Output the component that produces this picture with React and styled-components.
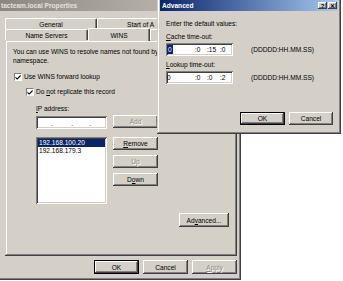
import React from "react";
import styled, { createGlobalStyle, css } from "styled-components";

const face = "#d4d0c8";

const GlobalStyle = createGlobalStyle`
  html, body {
    margin: 0;
    padding: 0;
    background: #fff;
  }
  body {
    font-family: "Liberation Sans", Arial, sans-serif;
    font-size: 6.6px;
    color: #000;
  }
`;

const raised = css`
  box-shadow: inset -1px -1px #404040, inset 1px 1px #fff,
    inset -2px -2px #808080, inset 2px 2px ${face};
`;

const sunken = css`
  box-shadow: inset 1px 1px #808080, inset -1px -1px #fff,
    inset 2px 2px #404040, inset -2px -2px ${face};
`;

const windowEdge = css`
  box-shadow: inset -1px -1px #404040, inset 1px 1px ${face},
    inset -2px -2px #808080, inset 2px 2px #fff;
`;

const Desktop = styled.div`
  position: relative;
  width: 343px;
  height: 281px;
  overflow: hidden;
  background: #fff;
`;

/* windows sit on the desktop at their own places */
const PropsWindow = styled.div`
  position: absolute;
  left: -4px;
  top: -3px;
  width: 245px;
  height: 283px;
  box-sizing: border-box;
  padding: 3px;
  background: ${face};
  ${windowEdge};
  display: flex;
  flex-direction: column;
`;

const AdvancedWindow = styled.div`
  position: absolute;
  left: 157px;
  top: -3px;
  width: 184px;
  height: 137px;
  box-sizing: border-box;
  padding: 3px;
  background: ${face};
  ${windowEdge};
  display: flex;
  flex-direction: column;
`;

const TitleBar = styled.div`
  height: 11px;
  flex: none;
  display: flex;
  align-items: center;
  padding-left: 2px;
  font-weight: bold;
  color: ${(p) => (p.$active ? "#fff" : "#e4e2dc")};
  background: ${(p) =>
    p.$active
      ? "linear-gradient(to right, #0a246a, #a6caf0)"
      : "linear-gradient(to right, #8c8880, #c8c4bc)"};
`;

const TitleText = styled.span`
  flex: 1;
  white-space: nowrap;
`;

const CaptionButton = styled.span`
  width: 9px;
  height: 7px;
  margin-right: 1px;
  background: ${face};
  ${raised};
  display: flex;
  align-items: center;
  justify-content: center;
  color: #000;
  font-size: 6px;
  font-weight: bold;
  line-height: 1;
`;

const PropsBody = styled.div`
  display: flex;
  flex-direction: column;
  padding: 7px 0 0 6px;
`;

const Tabs = styled.div`
  width: 232px;
  display: flex;
  flex-direction: column;
`;

const TabRow = styled.div`
  display: flex;
  height: 11px;
  align-items: flex-start;
`;

const Tab = styled.div`
  width: ${(p) => p.$w}px;
  height: 11px;
  box-sizing: border-box;
  flex: none;
  display: flex;
  align-items: center;
  justify-content: ${(p) => (p.$lead ? "flex-start" : "center")};
  padding-left: ${(p) => p.$lead || 0}px;
  white-space: nowrap;
  overflow: hidden;
  background: ${face};
  border-top: 1px solid #fff;
  border-left: 1px solid #fff;
  border-right: 1px solid #404040;
  border-radius: 2px 2px 0 0;
  box-shadow: inset -1px 0 #808080;
  ${(p) =>
    p.$active &&
    css`
      height: 13px;
      margin-top: -1px;
      position: relative;
      z-index: 1;
    `}
`;

const Panel = styled.div`
  width: 232px;
  height: 216px;
  box-sizing: border-box;
  background: ${face};
  ${windowEdge};
  display: flex;
  flex-direction: column;
  align-items: flex-start;
  padding-left: 8px;
`;

const Desc = styled.p`
  margin: 8px 0 0;
  width: 150px;
  line-height: 8.5px;
`;

const CheckRow = styled.label`
  display: flex;
  align-items: center;
  gap: 2px;
  height: 9px;
  margin-top: ${(p) => p.$top}px;
  margin-left: ${(p) => p.$indent}px;
`;

const Box = styled.span`
  width: 8px;
  height: 8px;
  box-sizing: border-box;
  background: #fff;
  border-top: 1px solid #808080;
  border-left: 1px solid #808080;
  border-right: 1px solid #fff;
  border-bottom: 1px solid #fff;
  display: flex;
  align-items: center;
  justify-content: center;
`;

const Label = styled.div`
  line-height: 9px;
  margin-top: ${(p) => p.$top}px;
  margin-left: ${(p) => p.$indent || 0}px;
`;

const IpGrid = styled.div`
  display: grid;
  grid-template-columns: 71px 45px;
  column-gap: 6px;
  margin: 2.5px 0 0 23px;
`;

const Field = styled.div`
  height: ${(p) => p.$h}px;
  margin-top: ${(p) => p.$top || 0}px;
  box-sizing: border-box;
  background: #fff;
  ${sunken};
  display: flex;
  align-items: center;
`;

const IpDot = styled.span`
  width: ${(p) => p.$w}px;
  flex: none;
  text-align: right;
  padding-top: 2px;
`;

const List = styled.div`
  height: 67px;
  margin-top: 8px;
  box-sizing: border-box;
  padding: 2px;
  background: #fff;
  ${sunken};
`;

const ListItem = styled.div`
  height: 8px;
  line-height: 8px;
  padding-left: 1px;
  ${(p) =>
    p.$selected &&
    css`
      background: #0a246a;
      color: #fff;
    `}
`;

const SideButtons = styled.div`
  display: flex;
  flex-direction: column;
  gap: 5px;
  margin-top: 8px;
`;

const Button = styled.button`
  width: ${(p) => p.$w || 45}px;
  height: ${(p) => p.$h || 13}px;
  padding: 0;
  flex: none;
  font: inherit;
  color: ${(p) => (p.disabled ? "#8c8a84" : "#000")};
  text-shadow: ${(p) => (p.disabled ? "1px 1px #fff" : "none")};
  background: ${face};
  border: none;
  ${(p) =>
    p.$default
      ? css`
          box-shadow: inset 0 0 0 1px #000, inset -2px -2px #404040,
            inset 2px 2px #fff, inset -3px -3px #808080;
        `
      : raised};
  u {
    text-decoration: underline;
  }
`;

const AdvancedButton = styled(Button)`
  align-self: flex-end;
  margin: 9px 8px 0 0;
`;

const ButtonBar = styled.div`
  display: flex;
  justify-content: flex-end;
  gap: 4px;
  width: 232px;
  margin-top: 4px;
`;

const DialogBody = styled.div`
  display: flex;
  flex-direction: column;
  padding: 0 5px 0 6px;
  flex: 1;
`;

const TimeRow = styled.div`
  display: flex;
  align-items: center;
  gap: 18px;
  margin-top: ${(p) => p.$top}px;
`;

const TimeField = styled(Field)`
  width: 67px;
  padding-left: 1px;
`;

const Seg = styled.span`
  width: ${(p) => p.$w}px;
  flex: none;
  white-space: nowrap;
`;

const Selected = styled.span`
  background: #0a246a;
  color: #fff;
  padding: 1px 1px;
`;

const DialogButtons = styled.div`
  display: flex;
  justify-content: flex-end;
  gap: 4px;
  margin-top: auto;
  margin-bottom: 6px;
`;

const CheckMark = () => (
  <svg width="6" height="6" viewBox="0 0 7 7">
    <path d="M0.5 3 L2.5 5 L6.5 1 L6.5 2.8 L2.5 6.8 L0.5 4.8 Z" fill="#000" />
  </svg>
);

const TimeValue = ({ parts, selectFirst }) => (
  <TimeField $h={13}>
    <Seg $w={28}>{selectFirst ? <Selected>{parts[0]}</Selected> : parts[0]}</Seg>
    <Seg $w={12}>:{parts[1]}</Seg>
    <Seg $w={13}>:{parts[2]}</Seg>
    <Seg $w={10}>:{parts[3]}</Seg>
  </TimeField>
);

export default function App() {
  return (
    <Desktop>
      <GlobalStyle />
      <PropsWindow>
        <TitleBar>
          <TitleText>tacteam.local Properties</TitleText>
        </TitleBar>
        <PropsBody>
          <Tabs>
            <TabRow>
              <Tab $w={92}>General</Tab>
              <Tab $w={140} $lead={29}>
                Start of A
              </Tab>
            </TabRow>
            <TabRow>
              <Tab $w={83}>Name Servers</Tab>
              <Tab $w={62} $active>
                WINS
              </Tab>
              <Tab $w={87} />
            </TabRow>
            <Panel>
              <Desc>You can use WINS to resolve names not found by namespace.</Desc>
              <CheckRow $top={7} $indent={1}>
                <Box>
                  <CheckMark />
                </Box>
                Use WINS forward lookup
              </CheckRow>
              <CheckRow $top={6} $indent={13}>
                <Box>
                  <CheckMark />
                </Box>
                <span>
                  Do <u>n</u>ot replicate this record
                </span>
              </CheckRow>
              <Label $top={7.5} $indent={23}>
                <u>I</u>P address:
              </Label>
              <IpGrid>
                <Field $h={13} $top={1}>
                  <IpDot $w={17}>.</IpDot>
                  <IpDot $w={20}>.</IpDot>
                  <IpDot $w={18}>.</IpDot>
                </Field>
                <Button disabled>Add</Button>
                <List>
                  <ListItem $selected>192.168.100.20</ListItem>
                  <ListItem>192.168.179.3</ListItem>
                </List>
                <SideButtons>
                  <Button>
                    <u>R</u>emove
                  </Button>
                  <Button disabled>Up</Button>
                  <Button>
                    D<u>o</u>wn
                  </Button>
                </SideButtons>
              </IpGrid>
              <AdvancedButton $w={50} $h={14}>
                Ad<u>v</u>anced...
              </AdvancedButton>
            </Panel>
          </Tabs>
          <ButtonBar>
            <Button $h={14} $default>
              OK
            </Button>
            <Button $h={14}>Cancel</Button>
            <Button $h={14} disabled>
              <u>A</u>pply
            </Button>
          </ButtonBar>
        </PropsBody>
      </PropsWindow>

      <AdvancedWindow>
        <TitleBar $active>
          <TitleText>Advanced</TitleText>
          <CaptionButton>?</CaptionButton>
          <CaptionButton>✕</CaptionButton>
        </TitleBar>
        <DialogBody>
          <Label $top={8}>Enter the default values:</Label>
          <Label $top={4}>
            <u>C</u>ache time-out:
          </Label>
          <TimeRow $top={2}>
            <TimeValue parts={["0", "0", "15", "0"]} selectFirst />
            <span>(DDDDD:HH.MM.SS)</span>
          </TimeRow>
          <Label $top={4}>
            <u>L</u>ookup time-out:
          </Label>
          <TimeRow $top={2}>
            <TimeValue parts={["0", "0", "0", "2"]} />
            <span>(DDDDD:HH.MM.SS)</span>
          </TimeRow>
          <DialogButtons>
            <Button $default>OK</Button>
            <Button $w={44}>Cancel</Button>
          </DialogButtons>
        </DialogBody>
      </AdvancedWindow>
    </Desktop>
  );
}
